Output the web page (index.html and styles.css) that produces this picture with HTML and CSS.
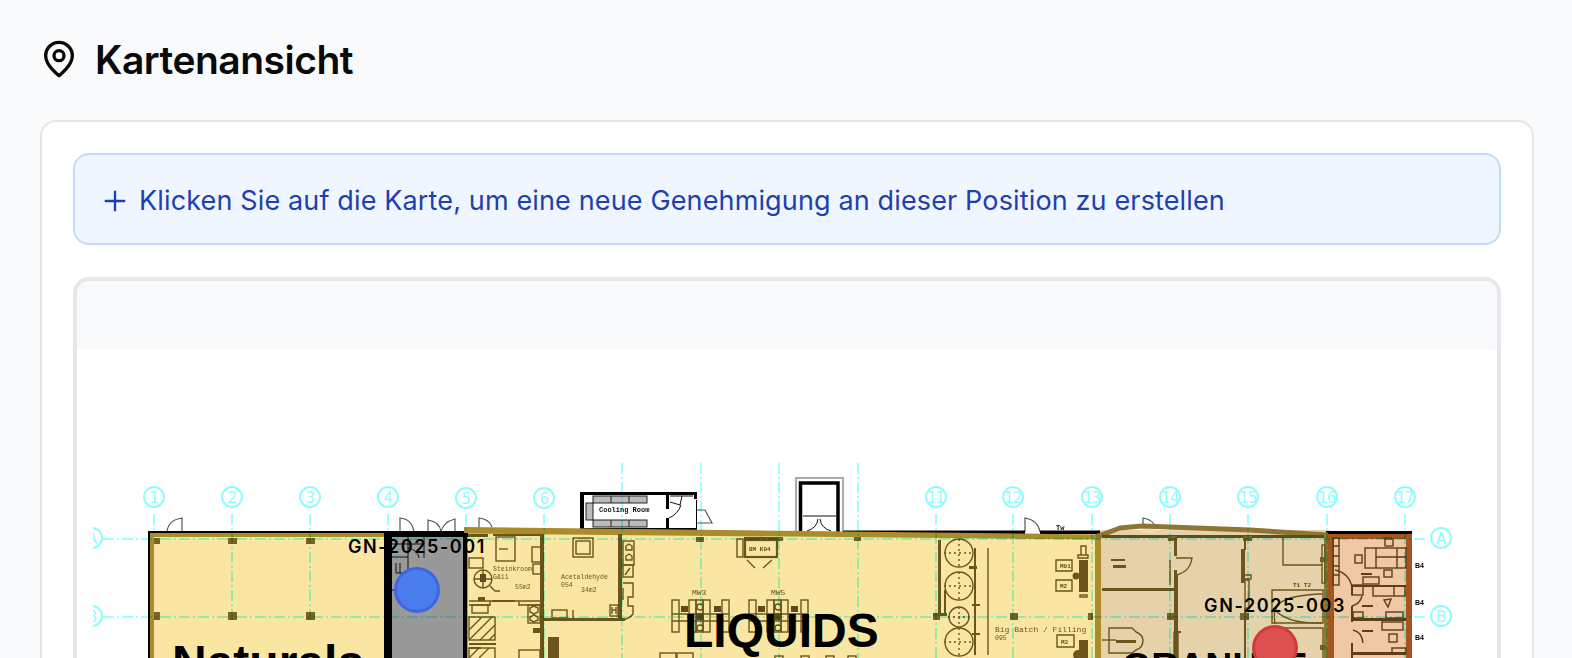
FILE: index.html
```html
<!DOCTYPE html>
<html lang="de">
<head>
<meta charset="utf-8">
<title>Kartenansicht</title>
<link rel="stylesheet" href="styles.css">
</head>
<body>
<main class="page">
  <h1 class="title">
    <svg class="title-icon" viewBox="0 0 24 24" fill="none" stroke="currentColor" stroke-width="2" stroke-linecap="round" stroke-linejoin="round"><path d="M20 10c0 6-8 12-8 12s-8-6-8-12a8 8 0 0 1 16 0Z"/><circle cx="12" cy="10" r="3"/></svg>
    <span class="title-text">Kartenansicht</span>
  </h1>
  <section class="card">
    <div class="hint">
      <svg class="hint-icon" viewBox="0 0 24 24" fill="none" stroke="currentColor" stroke-width="1.75" stroke-linecap="round" stroke-linejoin="round"><path d="M5 12h14"/><path d="M12 5v14"/></svg>
      <span class="hint-text">Klicken Sie auf die Karte, um eine neue Genehmigung an dieser Position zu erstellen</span>
    </div>
    <div class="map">
      <div class="map-toolbar"></div>
      <svg class="plan" viewBox="93 349 1404 400" role="img" aria-label="Lageplan">
        <g class="drawing">
          <!-- zones -->
          <rect class="f-yellow" x="150" y="533" width="948" height="220"/>
          <rect class="f-beige" x="1098" y="530" width="232" height="223"/>
          <rect class="f-orange" x="1330" y="533" width="80" height="220"/>

          <!-- outer doors -->
          <g class="door">
            <path d="M167 532Q168 520 182 518V532"/>
            <path d="M400 532V518Q412 519 414 532"/>
            <path d="M428 532V520Q440 522 441 532Q443 522 455 519V532"/>
            <path d="M479 528V518Q489 519 492 527"/>
            <path d="M697 510L705 510L712 523L697 523"/>
            <path d="M1025 532V518Q1038 520 1040 532"/>
            <path d="M1143 526V518Q1150 519 1154 524"/>
          </g>

          <!-- cooling room -->
          <g class="black">
            <rect x="580" y="492" width="117" height="3"/>
            <rect x="580" y="492" width="4" height="38"/>
            <rect x="666" y="492" width="3" height="17"/>
            <rect x="666" y="518" width="3" height="12"/>
            <rect x="694" y="492" width="3" height="7"/>
            <rect x="696" y="500" width="1" height="30"/>
            <rect x="584" y="528" width="113" height="2"/>
          </g>
          <g class="grey-box">
            <rect x="593" y="496" width="54" height="7"/>
            <rect x="593" y="520" width="54" height="7"/>
            <rect x="586" y="503" width="7" height="17"/>
            <path d="M611 496v7M629 496v7M611 520v7M629 520v7"/>
          </g>
          <text class="tiny tiny-black" x="599" y="512">Cooling Room</text>
          <path class="thin-black" d="M670 502L680 505L682 496M669 518Q678 514 681 505M670 496H693"/>

          <!-- tower -->
          <rect class="tower-outer" x="796" y="478" width="47" height="55"/>
          <path class="tower" d="M800.5 532V483H838V532"/>
          <path class="thin-black" d="M803 516H836M818 519Q817 528 807 531M820 519Q821 528 831 531"/>

          <!-- top walls -->
          <rect class="black" x="148" y="531" width="320" height="3"/>
          <rect class="black" x="843" y="530.5" width="182" height="3.5"/>
          <rect class="black" x="1040" y="530.5" width="60" height="3.5"/>
          <rect class="black" x="1326" y="531" width="86" height="3"/>
          <text class="tiny tiny-black" x="1056" y="530">Tw</text>
          <rect class="black" x="148" y="531" width="2" height="230"/>
          <rect class="gold" x="150" y="533" width="4" height="220"/>
          <rect class="gold" x="150" y="533" width="236" height="4"/>
          <polygon class="gold" points="464,527 1094,534.5 1100,533 1100,539 1094,539.5 464,533.5"/>
          <rect class="gold" x="1095" y="536" width="6" height="220"/>
          <path class="bronze-line" d="M1096 537L1120 528L1142 526L1250 530L1328 535"/>
          <rect class="cream" x="1143" y="529" width="12" height="4"/>
          <rect class="dark" x="1102" y="535" width="224" height="3"/>
          <rect class="bronze" x="1324" y="534" width="4" height="220"/>

          <!-- orange walls -->
          <rect class="rust" x="1327" y="534" width="85" height="5"/>
          <rect class="rust" x="1328" y="534" width="6" height="220"/>
          <rect class="rust" x="1406" y="534" width="6" height="220"/>

          <!-- grey zone -->
          <rect class="f-grey" x="384" y="533" width="84" height="220"/>
          <rect class="black" x="384" y="533" width="84" height="4"/>
          <rect class="black" x="384" y="533" width="8" height="220"/>
          <rect class="black" x="463" y="533" width="4" height="220"/>
          <path class="thin-black" d="M392 544H424M408 537V563M424 537V558M392 557H408M396 563V573H408V563M400 563V573M408 548Q418 550 419 558M392 590H398"/>

          <!-- pillars -->
          <g class="pillar">
            <rect x="154" y="538" width="6" height="6"/><rect x="228" y="538" width="9" height="6"/><rect x="306" y="538" width="9" height="6"/>
            <rect x="154" y="612" width="6" height="8"/><rect x="228" y="612" width="9" height="8"/><rect x="306" y="612" width="9" height="8"/>
            <rect x="696" y="537" width="8" height="5"/><rect x="775" y="537" width="8" height="4"/><rect x="854" y="537" width="7" height="4"/>
            <rect x="1010" y="613" width="8" height="7"/><rect x="1088" y="613" width="5" height="7"/><rect x="933" y="613" width="7" height="7"/>
            <rect x="1167" y="613" width="9" height="7"/><rect x="1168" y="536" width="9" height="5"/><rect x="1243" y="536" width="9" height="5"/>
            <rect x="1240" y="613" width="9" height="7"/><rect x="1320" y="557" width="6" height="5"/><rect x="1320" y="645" width="6" height="5"/>
          </g>

          <!-- room left of acetaldehyde -->
          <g class="wall">
            <rect x="540" y="534" width="4" height="224"/>
            <rect x="618" y="534" width="4" height="86"/>
            <rect x="541" y="618" width="84" height="3"/>
            <rect x="468" y="534" width="20" height="3"/>
            <rect x="493" y="534" width="47" height="2"/>
            <rect x="548" y="637" width="11" height="24"/>
            <rect x="469" y="643" width="27" height="2"/>
            <rect x="469" y="647" width="12" height="2"/>
            <rect x="533" y="628" width="7" height="5"/>
          </g>
          <g class="line">
            <rect x="496" y="537" width="19" height="24"/>
            <path d="M499 549H508"/>
            <rect x="532" y="547" width="9" height="15"/>
            <rect x="533" y="564" width="8" height="10"/>
            <rect x="469" y="558" width="14" height="10"/>
            <rect x="472" y="605" width="16" height="8"/>
            <circle cx="483" cy="579" r="9"/>
            <path d="M474 579H492M483 570V588M490 586L495 591H500"/>
            <path d="M469 601H541M469 605H490M490 601V606M519 601V606M519 605H541"/>
            <rect x="469" y="617" width="26" height="23"/>
            <path d="M469 630L482 617M469 640L492 617M480 640L495 625M489 640L495 634"/>
            <rect x="469" y="648" width="26" height="14"/>
            <path d="M469 658L479 648M479 658L489 648"/>
            <rect x="528" y="605" width="12" height="18"/>
            <path d="M530 608L534 606L538 608L538 612L534 614L530 612ZM530 617L534 615L538 617L538 620L534 622L530 620Z"/>
            <rect x="519" y="650" width="21" height="14"/>
            <rect x="573" y="538" width="20" height="19"/>
            <rect x="576" y="541" width="14" height="13"/>
            <rect x="552" y="610" width="15" height="8"/>
            <path d="M573 610V618"/>
            <rect x="610" y="605" width="8" height="11"/>
            <path d="M612 607V614M616 607V614M612 610H616"/>
          </g>
          <rect class="dark" x="480" y="574" width="6" height="8"/>
          <rect class="wall" x="478" y="597" width="7" height="4"/>
          <path class="wall-thin" d="M492 601H515"/>
          <text class="tiny" x="493" y="571">Steinkroom</text>
          <text class="tiny" x="493" y="579">G&amp;11</text>
          <text class="tiny" x="515" y="589">55m2</text>
          <text class="tiny" x="561" y="579">Acetaldehyde</text>
          <text class="tiny" x="561" y="587">054</text>
          <text class="tiny" x="581" y="592">34m2</text>

          <!-- shelves right of wall -->
          <g class="line">
            <rect x="623" y="541" width="11" height="24"/>
            <path d="M626 546L629 544L632 546L632 550L626 550ZM626 556L629 554L632 556L632 560L626 560Z"/>
            <rect x="623" y="565" width="10" height="12"/>
            <path d="M625 575L630 568"/>
            <path d="M623 583H633V597H628V606H633V614Q630 618 623 620"/>
            <path d="M623 588V600"/>
          </g>

          <!-- office at top -->
          <g class="line">
            <rect class="line-strong" x="745" y="540" width="32" height="17"/>
            <rect x="737" y="539" width="6" height="18"/>
            <path d="M747 560L755 568M772 560L763 568"/>
          </g>
          <rect class="wall" x="744" y="537" width="34" height="2"/>
          <text class="tiny tiny-dark" x="749" y="551">BM K04</text>
          <text class="tiny tiny-big" x="692" y="595">MW3</text>
          <text class="tiny tiny-big" x="771" y="595">MW5</text>

          <!-- desk groups -->
          <g class="line">
            <rect x="672" y="600" width="7" height="32"/><rect x="689" y="600" width="7" height="32"/><rect x="696" y="600" width="7" height="32"/><rect x="703" y="600" width="7" height="32"/><rect x="722" y="600" width="7" height="32"/>
            <path d="M672 614H729M672 621H729"/>
            <circle cx="700" cy="607" r="3"/><circle cx="700" cy="628" r="3"/>
            <rect x="749" y="600" width="7" height="32"/><rect x="767" y="600" width="7" height="32"/><rect x="774" y="600" width="7" height="32"/><rect x="781" y="600" width="7" height="32"/><rect x="801" y="600" width="7" height="32"/>
            <path d="M749 614H808M749 621H808"/>
            <circle cx="778" cy="607" r="3"/><circle cx="778" cy="628" r="3"/>
            <rect x="660" y="653" width="16" height="10"/><rect x="677" y="653" width="16" height="10"/>
            <rect x="775" y="656" width="8" height="8"/><rect x="801" y="656" width="8" height="8"/><rect x="826" y="656" width="8" height="8"/><rect x="848" y="656" width="8" height="8"/>
          </g>
          <g class="dark">
            <rect x="681" y="606" width="7" height="6"/><rect x="714" y="606" width="7" height="6"/><rect x="696" y="613" width="8" height="7"/>
            <rect x="758" y="606" width="7" height="6"/><rect x="791" y="606" width="7" height="6"/><rect x="774" y="613" width="8" height="7"/>
          </g>

          <!-- tanks -->
          <g class="line">
            <circle cx="959" cy="553" r="14"/><circle cx="959" cy="586" r="14"/><circle cx="959" cy="617" r="10"/><circle cx="959" cy="642" r="14"/>
            <path class="dots" d="M944 553H974M959 539V567M944 586H974M959 572V600M948 617H970M959 607V627M944 642H974M959 628V656"/>
            <path d="M988 548V655"/>
            <path d="M1057 635H1074V647H1057ZM1056 560H1072V571H1056ZM1056 580H1072V591H1056Z"/>
            <path d="M1081 546H1086V555H1081ZM1078 555H1088V558H1078Z"/>
            <rect x="1080" y="595" width="7" height="2"/>
          </g>
          <g class="wall">
            <rect x="938" y="540" width="3" height="74"/>
            <rect x="944" y="590" width="2" height="24"/>
            <rect x="974" y="548" width="2" height="107"/>
            <rect x="933" y="613" width="14" height="3"/>
            <rect x="1079" y="560" width="9" height="32"/>
            <circle cx="1076" cy="576" r="3.5"/>
            <rect x="1079" y="640" width="9" height="20"/>
            <circle cx="1078" cy="655" r="5"/>
            <rect x="969" y="566" width="8" height="3"/>
            <rect x="972" y="604" width="8" height="2"/>
            <rect x="972" y="633" width="8" height="2"/>
          </g>
          <text class="tiny tiny-big" x="995" y="632">Big Batch / Filling</text>
          <text class="tiny" x="995" y="640">095</text>
          <text class="tiny tiny-dark" x="1060" y="568">M01</text>
          <text class="tiny tiny-dark" x="1060" y="588">M2</text>
          <text class="tiny tiny-dark" x="1061" y="644">M3</text>

          <!-- granulate rooms -->
          <g class="wall">
            <rect x="1174" y="538" width="3" height="18"/>
            <rect x="1174" y="575" width="4" height="83"/>
            <rect x="1102" y="588" width="72" height="3"/>
            <rect x="1241" y="549" width="4" height="34"/>
            <rect x="1244" y="538" width="2" height="12"/>
            <rect x="1244" y="608" width="2" height="50"/>
            <rect x="1174" y="570" width="3" height="8"/>
            <rect x="1111" y="559" width="14" height="2"/>
            <rect x="1113" y="565" width="13" height="3"/>
            <rect x="1116" y="640" width="20" height="3"/>
            <rect x="1174" y="631" width="7" height="2"/>
          </g>
          <g class="line">
            <path d="M1174 590H1102"/>
            <path d="M1170 560V585"/>
            <path d="M1176 558H1192Q1190 572 1176 575"/>
            <path d="M1283 538V565H1322"/>
            <rect x="1322" y="545" width="3" height="38"/>
            <rect x="1245" y="580" width="4" height="28"/>
            <path d="M1245 575H1251V579H1245"/>
            <path d="M1272 590H1323V623H1272Z"/>
            <path d="M1275 624Q1272 610 1280 603Q1290 595 1322 594M1275 610Q1288 624 1322 623"/>
            <path d="M1272 628H1323V670M1272 628V660"/>
            <path d="M1109 628H1132L1136 632Q1143 635 1143 640Q1143 648 1136 650L1132 653H1109Z"/>
            <path d="M1102 640H1116"/>
            <rect x="1174" y="632" width="4" height="30"/>
          </g>
          <text class="tiny tiny-dark" x="1293" y="587">T1 T2</text>

          <!-- offices -->
          <g class="office">
            <rect x="1365" y="548" width="41" height="20"/>
            <path d="M1376 548V568M1397 548V568M1376 557H1406"/>
            <rect x="1385" y="539" width="8" height="7"/>
            <path d="M1383 538H1392"/>
            <rect x="1355" y="555" width="7" height="8"/>
            <rect x="1384" y="570" width="8" height="7"/>
            <rect x="1363" y="577" width="16" height="7"/>
            <rect x="1352" y="585" width="11" height="10"/>
            <rect x="1373" y="586" width="32" height="10"/>
            <path d="M1394 586V596"/>
            <path d="M1335 570Q1349 573 1352 587"/>
            <path d="M1362 596Q1360 604 1352 606"/>
            <rect x="1353" y="612" width="10" height="6"/>
            <rect x="1386" y="612" width="17" height="6"/>
            <rect x="1382" y="622" width="21" height="8"/>
            <path d="M1353 630Q1362 632 1363 643"/>
            <rect x="1389" y="634" width="8" height="8"/>
            <path d="M1384 600L1391 599L1388 607Z"/>
            <rect x="1392" y="648" width="14" height="5"/>
            <rect x="1333" y="538" width="6" height="47"/>
            <path d="M1333 546H1339M1333 556H1339M1333 566H1339M1333 575H1339"/>
          </g>
          <g class="office-wall">
            <rect x="1352" y="585" width="54" height="2"/>
            <rect x="1351" y="606" width="2" height="16"/>
            <rect x="1352" y="618" width="54" height="3"/>
            <rect x="1351" y="643" width="2" height="20"/>
            <rect x="1352" y="652" width="54" height="3"/>
            <rect x="1351" y="585" width="2" height="10"/>
            <rect x="1361" y="573" width="11" height="2"/>
            <rect x="1362" y="605" width="11" height="2"/>
            <rect x="1362" y="630" width="11" height="2"/>
          </g>
          <g class="side-notes">
            <text x="1415" y="568">B4</text>
            <text x="1415" y="605">B4</text>
            <text x="1415" y="640">B4</text>
          </g>

          <!-- grid -->
          <g class="grid-lines">
            <path d="M154 514V534M232 514V620M310 514V620M388 514V620M466 514V658M544 514V658M622 463V658M701 463V658M779 463V658M858 463V658M936 514V658M1013 514V658M1092 514V658M1170 514V658M1248 514V658M1327 514V658M1405 514V658"/>
            <path d="M103 539H1425M103 617H1425"/>
          </g>
          <g class="bubbles">
            <circle cx="154" cy="497" r="10"/><circle cx="232" cy="497" r="10"/><circle cx="310" cy="497" r="10"/><circle cx="388" cy="497" r="10"/><circle cx="466" cy="498" r="10"/><circle cx="544" cy="498" r="10"/>
            <circle cx="936" cy="497" r="10"/><circle cx="1013" cy="497" r="10"/><circle cx="1092" cy="497" r="10"/><circle cx="1170" cy="497" r="10"/><circle cx="1248" cy="497" r="10"/><circle cx="1327" cy="497" r="10"/><circle cx="1405" cy="497" r="10"/>
            <circle cx="92" cy="538" r="10"/><circle cx="92" cy="616" r="10"/><circle cx="1441" cy="538" r="10"/><circle cx="1441" cy="616" r="10"/>
          </g>
          <g class="bubble-text">
            <text x="154" y="503">1</text><text x="232" y="503">2</text><text x="310" y="503">3</text><text x="388" y="503">4</text><text x="466" y="504">5</text><text x="544" y="504">6</text>
            <text x="936" y="503">11</text><text x="1013" y="503">12</text><text x="1092" y="503">13</text><text x="1170" y="503">14</text><text x="1248" y="503">15</text><text x="1327" y="503">16</text><text x="1405" y="503">17</text>
            <text x="92" y="544">A</text><text x="92" y="622">B</text><text x="1441" y="544">A</text><text x="1441" y="622">B</text>
          </g>
        </g>

        <!-- area names -->
        <text class="area" x="172" y="679">Naturals</text>
        <text class="area" x="684" y="647">LIQUIDS</text>
        <text class="area area-small" x="1122" y="679">GRANULE</text>

        <!-- permit markers -->
        <circle class="pin pin-blue" cx="417" cy="590" r="21.5"/>
        <text class="pin-label" x="417" y="553">GN-2025-001</text>
        <circle class="pin pin-red" cx="1275" cy="648" r="21.5"/>
        <text class="pin-label" x="1275" y="612">GN-2025-003</text>
      </svg>
    </div>
  </section>
</main>
</body>
</html>
```

FILE: styles.css
```css
* { box-sizing: border-box; }

html, body {
  margin: 0;
  height: 100%;
  overflow: hidden;
  background: #f9fafb;
}

body {
  font-family: Inter, "Liberation Sans", sans-serif;
  color: #0a0a0a;
}

.page {
  padding: 39px 38px 0 40px;
}

.title {
  display: flex;
  align-items: center;
  gap: 16px;
  height: 40px;
  margin: 0 0 41px;
  font-size: 39px;
  line-height: 40px;
  font-weight: 600;
  letter-spacing: -0.5px;
}

.title-text {
  padding-top: 2px;
}

.title-icon {
  width: 40px;
  height: 40px;
  flex: none;
  margin-left: -1px;
}

.card {
  background: #fff;
  border: 2px solid #e7e5e4;
  border-radius: 16px;
  padding: 31px;
}

.hint {
  display: flex;
  align-items: center;
  gap: 8px;
  height: 92px;
  padding: 0 24px;
  margin-bottom: 32px;
  background: #eff6ff;
  border: 2px solid #bfdbfe;
  border-radius: 16px;
  color: #1e40af;
  font-size: 27px;
  letter-spacing: 0.14px;
}

.hint-text {
  padding-top: 2px;
}

.hint-icon {
  width: 32px;
  height: 32px;
  flex: none;
  margin-top: 3px;
}

.map {
  border: 4px solid #e5e7eb;
  border-radius: 16px;
  background: #fff;
  overflow: hidden;
}

.map-toolbar {
  height: 68px;
  background: #f9fafb;
}

.plan {
  display: block;
  width: 1404px;
  height: 400px;
  margin-left: 16px;
}

.drawing { filter: blur(0.35px); }

.f-yellow { fill: #f9e6a3; }
.f-beige { fill: #e6d2aa; }
.f-orange { fill: #f1c8a5; }
.f-grey { fill: #999; }

.black { fill: #000; }
.gold { fill: #ab8c2d; }
.bronze { fill: #8f7532; }
.rust { fill: #a5561f; }
.dark { fill: #5f4c1b; }
.cream { fill: #ecdcb8; }
.wall { fill: #6b551c; }
.pillar { fill: #7a6424; }
.wall-thin { fill: none; stroke: #6b551c; stroke-width: 2; }

.bronze-line { fill: none; stroke: #8f7532; stroke-width: 5; stroke-linejoin: round; }

.door { fill: #fff; stroke: #555; stroke-width: 1.2; }
.grey-box { fill: #bbb; stroke: #222; stroke-width: 1; }
.thin-black { fill: none; stroke: #111; stroke-width: 1; }
.tower-outer { fill: #fff; stroke: #aaa; stroke-width: 2; }
.tower { fill: none; stroke: #000; stroke-width: 3.5; }

.line { fill: none; stroke: #6b551c; stroke-width: 1.4; }
.line-strong { stroke: #6b551c; stroke-width: 2.2; }
.dots { stroke-dasharray: 2 3; }

.office { fill: none; stroke: #5e3d17; stroke-width: 1.4; }
.office-wall { fill: #5e3d17; }

.tiny {
  font-family: "Liberation Mono", monospace;
  font-size: 6.5px;
  fill: #6b551c;
}
.tiny-black { fill: #111; font-size: 7px; font-weight: 700; }
.tiny-dark { fill: #5f4c1b; font-size: 6px; font-weight: 700; }
.tiny-big { font-size: 8px; }

.side-notes text {
  font-family: "Liberation Sans", sans-serif;
  font-size: 7px;
  font-weight: 700;
  fill: #000;
}

.grid-lines {
  fill: none;
  stroke: #80ffff;
  stroke-width: 1.5;
  stroke-dasharray: 11 3 2 3;
  mix-blend-mode: multiply;
}

.bubbles {
  fill: none;
  stroke: #8ffcff;
  stroke-width: 2;
}

.bubble-text text {
  font-family: "DejaVu Sans", sans-serif;
  font-size: 15px;
  letter-spacing: -1px;
  fill: #8ffcff;
  text-anchor: middle;
}

.area {
  font-family: "Liberation Sans", sans-serif;
  font-weight: 700;
  font-size: 48px;
  fill: #000;
}

.area-small { font-size: 37.5px; }

.pin { stroke-width: 3; }
.pin-blue { fill: #4a7dec; stroke: #3f66e0; }
.pin-red { fill: #dd5050; stroke: #cb3d3d; }

.pin-label {
  font-family: Inter, "Liberation Sans", sans-serif;
  font-weight: 600;
  font-size: 18px;
  letter-spacing: 1.6px;
  fill: #000;
  text-anchor: middle;
}
```
